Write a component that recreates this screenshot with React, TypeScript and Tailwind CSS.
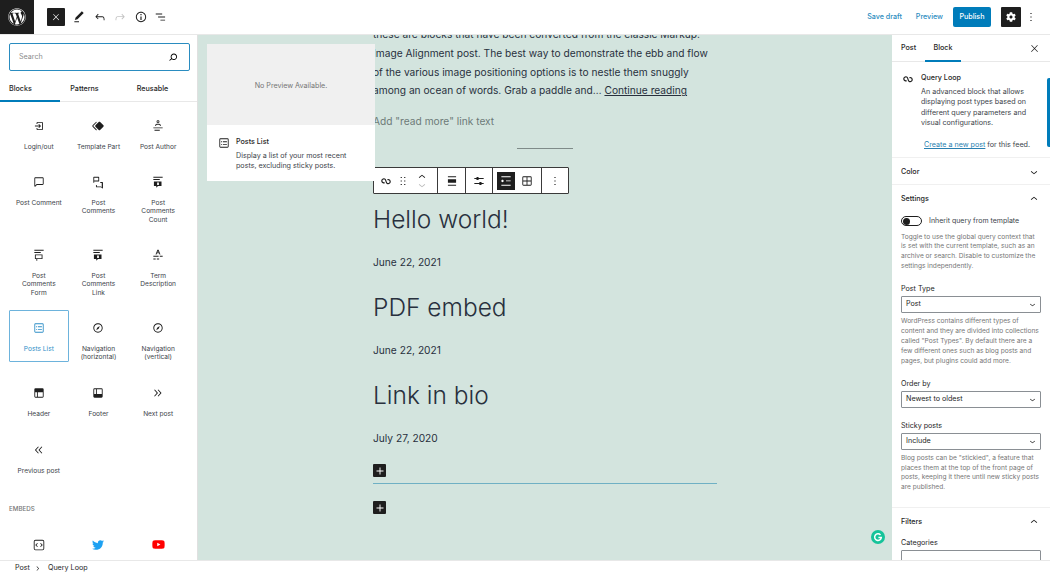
import React from "react";
import { FaWordpress, FaCog, FaTwitter, FaYoutube } from "react-icons/fa";

const FONT = "font-['Inter','Liberation_Sans',sans-serif]";

// WordPress icon paths
const P = {
  close: "M13 11.8l6.1-6.3-1-1-6.1 6.2-6.1-6.2-1 1 6.1 6.3-6.5 6.7 1 1 6.5-6.6 6.5 6.6 1-1z",
  pencil: "M20.1 5.1L16.9 2 6.2 12.7l-1.3 4.4 4.5-1.3L20.1 5.1zM4 20.8h8v-1.5H4v1.5z",
  undo: "M18.3 11.7c-.6-.6-1.4-.9-2.3-.9H6.7l2.9-3.3-1.1-1-4.5 5L8.5 16l1-1-2.7-2.7H16c.5 0 .9.2 1.3.5 1 1 1 3.4 1 4.5v.3h1.5v-.2c0-1.5 0-4.3-1.5-5.7z",
  redo: "M15.6 6.5l-1.1 1 2.9 3.3H8c-.9 0-1.7.3-2.3.9-1.4 1.5-1.4 4.2-1.4 5.6v.2h1.5v-.3c0-1.1 0-3.5 1-4.5.3-.3.7-.5 1.3-.5h9.2L14.5 15l1.1 1.1 4.6-4.6-4.6-5z",
  info: "M12 3.2c-4.8 0-8.8 3.9-8.8 8.8 0 4.8 3.9 8.8 8.8 8.8 4.8 0 8.8-3.9 8.8-8.8 0-4.8-4-8.8-8.8-8.8zm0 16c-4 0-7.2-3.3-7.2-7.2C4.8 8 8 4.8 12 4.8s7.2 3.3 7.2 7.2c0 4-3.2 7.2-7.2 7.2zM11 17h2v-6h-2v6zm0-8h2V7h-2v2z",
  outline: "M3 6h11v1.5H3zM7 11.2h12v1.5H7zM11 16.5h8V18h-8z",
  search: "M13.5 6C10.5 6 8 8.5 8 11.5c0 1.1.3 2.1.9 3l-3.4 3 1 1.1 3.4-2.9c1 .9 2.2 1.4 3.6 1.4 3 0 5.5-2.5 5.5-5.5C19 8.5 16.5 6 13.5 6zm0 9.5c-2.2 0-4-1.8-4-4s1.8-4 4-4 4 1.8 4 4-1.8 4-4 4z",
  login: "M11 14.5l1.1 1.1 3-3 .5-.5-.6-.6-3-3-1 1 1.7 1.7H5v1.5h7.7L11 14.5zM16.8 5h-7c-1.1 0-2 .9-2 2v1.5h1.5V7c0-.3.2-.5.5-.5h7c.3 0 .5.2.5.5v10c0 .3-.2.5-.5.5h-7c-.3 0-.5-.2-.5-.5v-1.5H7.8V17c0 1.1.9 2 2 2h7c1.1 0 2-.9 2-2V7c0-1.1-.9-2-2-2z",
  part: "M21.3 10.8l-5.6-5.6c-.7-.7-1.8-.7-2.5 0l-5.6 5.6c-.7.7-.7 1.8 0 2.5l5.6 5.6c.3.3.8.5 1.2.5s.9-.2 1.2-.5l5.6-5.6c.8-.7.8-1.9.1-2.5zm-17.6 1L10 5.5l-1-1-6.3 6.3c-.7.7-.7 1.8 0 2.5L9 19.5l1.1-1.1-6.3-6.3c-.2 0-.2-.2-.1-.3z",
  author: "M13 4.5a1 1 0 11-2 0 1 1 0 012 0zm1.5 0a2.5 2.5 0 11-5 0 2.5 2.5 0 015 0zm2.25 7.5v-1A2.75 2.75 0 0014 8.25h-4A2.75 2.75 0 007.25 11v1h1.5v-1c0-.69.56-1.25 1.25-1.25h4c.69 0 1.25.56 1.25 1.25v1h1.5zM6 20h9v-1.5H6V20zm14-4H4v-1.5h16V16z",
  comment: "M18 4H6c-1.1 0-2 .9-2 2v12.9c0 .6.5 1.1 1.1 1.1.3 0 .5-.1.8-.3L8.5 17H18c1.1 0 2-.9 2-2V6c0-1.1-.9-2-2-2zm.5 11c0 .3-.2.5-.5.5H7.9l-2.4 2.4V6c0-.3.2-.5.5-.5h12c.3 0 .5.2.5.5v9z",
  comments: "M14 10.1V4c0-.6-.4-1-1-1H5c-.6 0-1 .4-1 1v9.3h1.5V11.1h7.5c.6 0 1-.4 1-1zm-1.5-.5h-7V4.5h7v5.1zM19 12h-3.1v1.5h2.5v7.3l-1.2-1.2H10v-2.5H8.5v3c0 .6.4 1 1 1h7.7l1.8 1.8c.1.1.3.2.6.2.1 0 .2 0 .3-.1.4-.1.6-.5.6-.8V13c0-.6-.4-1-1-1z",
  count: "M4 3h16v1.5H4zM4 7h11v1.5H4zM5 11h13v8h-6l-3 3v-3H5zm5.5 2v4h3v-4z",
  form: "M4 3h16v1.5H4zM4 7h11v1.5H4zM5 11h13v8H9v3H7.5v-3H5zm1.5 1.5v5h10v-5z",
  term: "M11 3h2l3.2 8h-1.6l-.8-2H10.2l-.8 2H7.8zm1 2-1.2 2.6h2.4zM4 13.5h9V15H4zM15 13.5h5V15h-5zM4 18h4v1.5H4zM10 18h4v1.5h-4z",
  postsList: "M18 5.5H6a.5.5 0 00-.5.5v12a.5.5 0 00.5.5h12a.5.5 0 00.5-.5V6a.5.5 0 00-.5-.5zM6 4h12a2 2 0 012 2v12a2 2 0 01-2 2H6a2 2 0 01-2-2V6a2 2 0 012-2zm1 5h1.5v1.5H7V9zm1.5 4.5H7V15h1.5v-1.5zM10 9h7v1.5h-7V9zm7 4.5h-7V15h7v-1.5z",
  nav: "M12 4c-4.4 0-8 3.6-8 8s3.6 8 8 8 8-3.6 8-8-3.6-8-8-8zm0 14.5c-3.6 0-6.5-2.9-6.5-6.5S8.4 5.5 12 5.5s6.5 2.9 6.5 6.5-2.9 6.5-6.5 6.5zM9 16l4.5-3L15 8.4l-4.5 3L9 16z",
  header: "M18.5 10.5H10v8h8a.5.5 0 00.5-.5v-7.5zm-10 0h-3V18a.5.5 0 00.5.5h2.5v-8zM6 4h12a2 2 0 012 2v12a2 2 0 01-2 2H6a2 2 0 01-2-2V6a2 2 0 012-2z",
  footer: "M18 5.5h-8v8h8.5V6a.5.5 0 00-.5-.5zm-9.5 8h-3V6a.5.5 0 01.5-.5h2.5v8zM6 4h12a2 2 0 012 2v12a2 2 0 01-2 2H6a2 2 0 01-2-2V6a2 2 0 012-2z",
  next: "M6.6 6L5.4 7l4.5 5-4.5 5 1.1 1 5.5-6-5.4-6zm6 0l-1.1 1 4.5 5-4.5 5 1.1 1 5.5-6-5.5-6z",
  prev: "M11.6 7l-1.1-1L5 12l5.5 6 1.1-1L7 12l4.6-5zm6 0l-1.1-1-5.5 6 5.5 6 1.1-1-4.6-5 4.6-5z",
  embed: "M6 3h12a3 3 0 013 3v12a3 3 0 01-3 3H6a3 3 0 01-3-3V6a3 3 0 013-3zm0 1.5A1.5 1.5 0 004.5 6v12A1.5 1.5 0 006 19.5h12a1.5 1.5 0 001.5-1.5V6A1.5 1.5 0 0018 4.5zM10 9.5L7.5 12l2.5 2.5-1 1L5.5 12 9 8.5zM14 9.5l1-1 3.5 3.5-3.5 3.5-1-1 2.5-2.5z",
  chevronDown: "M17.5 11.6L12 16l-5.5-4.4.9-1.2L12 14l4.5-3.6 1 1.2z",
  chevronUp: "M6.5 12.4L12 8l5.5 4.4-.9 1.2L12 10l-4.5 3.6-1-1.2z",
  chevronRight: "M10.6 6L9.5 7l4.6 5-4.6 5 1.1 1 5.5-6-5.5-6z",
  drag: "M8 7h2V5H8v2zm0 6h2v-2H8v2zm0 6h2v-2H8v2zm6-14v2h2V5h-2zm0 8h2v-2h-2v2zm0 6h2v-2h-2v2z",
  more: "M13 19h-2v-2h2v2zm0-6h-2v-2h2v2zm0-6h-2V5h2v2z",
  list: "M4 4v1.5h16V4H4zm8 8.5h8V11h-8v1.5zM4 20h16v-1.5H4V20zm4-8c0-1.1-.9-2-2-2s-2 .9-2 2 .9 2 2 2 2-.9 2-2z",
  grid: "M6 4h12a2 2 0 012 2v12a2 2 0 01-2 2H6a2 2 0 01-2-2V6a2 2 0 012-2zm0 1.5a.5.5 0 00-.5.5v5.25h5.75V5.5zm6.75 0v5.75h5.75V6a.5.5 0 00-.5-.5zm5.75 7.25h-5.75v5.75H18a.5.5 0 00.5-.5zm-7.25 5.75v-5.75H5.5V18a.5.5 0 00.5.5z",
  align: "M5 5.5h14V4H5v1.5zm0 14.5h14v-1.5H5V20zM5 9h14v6H5V9z",
  sliders: "M14.5 13.8c-1.1 0-2.1.7-2.4 1.8H4V17h8.1c.3 1 1.3 1.8 2.4 1.8s2.1-.7 2.4-1.8H20v-1.5h-3.1c-.3-1-1.3-1.7-2.4-1.7zM11.9 7c-.3-1-1.3-1.8-2.4-1.8S7.4 6 7.1 7H4v1.5h3.1c.3 1 1.3 1.8 2.4 1.8s2.1-.7 2.4-1.8H20V7h-8.1z",
  plus: "M18 11.2h-5.2V6h-1.6v5.2H6v1.6h5.2V18h1.6v-5.2H18z",
};

function Icon({ d, size = 14, className = "" }: { d: string; size?: number; className?: string }) {
  return (
    <svg width={size} height={size} viewBox="0 0 24 24" fill="currentColor" fillRule="evenodd" className={`shrink-0 ${className}`}>
      <path d={d} />
    </svg>
  );
}

function LoopIcon({ size = 14 }: { size?: number }) {
  return (
    <svg width={size} height={size} viewBox="0 0 24 24" fill="none" stroke="currentColor" strokeWidth="2" className="shrink-0">
      <path d="M9.6 14.8a3.4 3.4 0 1 1 1.9-4l1 3.2a3.4 3.4 0 1 0 1.9-4" />
    </svg>
  );
}

const BLOCKS: { label: string; icon: string; active?: boolean; tall?: boolean }[] = [
  { label: "Login/out", icon: P.login },
  { label: "Template Part", icon: P.part },
  { label: "Post Author", icon: P.author },
  { label: "Post Comment", icon: P.comment },
  { label: "Post Comments", icon: P.comments },
  { label: "Post Comments Count", icon: P.count },
  { label: "Post Comments Form", icon: P.form },
  { label: "Post Comments Link", icon: P.count },
  { label: "Term Description", icon: P.term },
  { label: "Posts List", icon: P.postsList, active: true },
  { label: "Navigation (horizontal)", icon: P.nav, tall: true },
  { label: "Navigation (vertical)", icon: P.nav, tall: true },
  { label: "Header", icon: P.header, tall: true },
  { label: "Footer", icon: P.footer, tall: true },
  { label: "Next post", icon: P.next, tall: true },
  { label: "Previous post", icon: P.prev },
];

function BlockCell({ label, icon, active, tall }: { label: string; icon: string; active?: boolean; tall?: boolean }) {
  return (
    <div
      className={`flex flex-col items-center rounded-[1px] border px-[5px] pt-[10px] ${tall ? "pb-[8.7px]" : "pb-[7.7px]"} ${
        active ? "border-[#6db3dc] text-[#2f8fc7]" : "border-transparent text-[#1e1e1e]"
      }`}
    >
      <Icon d={icon} />
      <span className={`mt-[10px] text-center text-[6.6px] leading-[8.3px] ${active ? "" : "text-[#3c434a]"}`}>{label}</span>
    </div>
  );
}

function LeftPanel() {
  return (
    <aside className="flex h-full w-[198px] shrink-0 flex-col overflow-hidden border-r border-[#e0e0e0] bg-white">
      <div className="mx-[9px] mt-[8px] flex h-[28px] w-[181px] shrink-0 items-center justify-between rounded-[2px] border border-[#2a8cc0] px-[9px]">
        <span className="pt-[1px] text-[7.15px] text-[#8a8a8a]">Search</span>
        <Icon d={P.search} />
      </div>
      <div className="mt-[10px] flex h-[21px] shrink-0 items-center border-b border-[#e8e8e8] pb-[3px] text-[7.15px] font-medium text-[#1e1e1e]">
        <div className="relative flex h-full w-[60px] items-center pl-[9px]">
          Blocks
          <div className="absolute right-0 bottom-[-4px] left-0 h-[2px] bg-[#007cba]" />
        </div>
        <div className="flex h-full w-[49px] items-center justify-center">Patterns</div>
        <div className="flex h-full w-[87px] items-center justify-center">Reusable</div>
      </div>
      <div className="mx-[9px] mt-[6px] grid shrink-0 grid-cols-3 items-start gap-y-[4.2px]">
        {BLOCKS.map(b => (
          <BlockCell key={b.label} {...b} />
        ))}
      </div>
      <div className="mx-[9px] mt-[20px] shrink-0 text-[6.2px] font-medium text-[#757575]">EMBEDS</div>
      <div className="mx-[9px] mt-[24px] grid shrink-0 grid-cols-3 justify-items-center">
        <div className="flex h-[14px] items-center text-[#1e1e1e]">
          <Icon d={P.embed} size={14} />
        </div>
        <div className="flex h-[14px] items-center text-[#1da1f2]">
          <FaTwitter size={12} />
        </div>
        <div className="flex h-[14px] items-center text-[#ff0000]">
          <FaYoutube size={13} />
        </div>
      </div>
    </aside>
  );
}

function TopBar() {
  return (
    <header className="flex h-[35px] shrink-0 items-center border-b border-[#e8e8e8] bg-white">
      <div className="flex h-[34px] w-[34px] shrink-0 items-center justify-center bg-[#1e1e1e] text-white">
        <FaWordpress size={18} />
      </div>
      <div className="ml-[13px] flex h-[18px] w-[18px] items-center justify-center rounded-[1px] bg-[#1e1e1e] text-white">
        <Icon d={P.close} size={10} />
      </div>
      <div className="ml-[7px] flex items-center gap-[6.5px] text-[#1e1e1e]">
        <Icon d={P.pencil} />
        <Icon d={P.undo} />
        <Icon d={P.redo} className="text-[#c4c4c4]" />
        <Icon d={P.info} />
        <Icon d={P.outline} />
      </div>
      <div className="ml-auto flex items-center text-[7.15px] font-medium">
        <span className="pt-[1px] text-[#2a8cc0]">Save draft</span>
        <span className="ml-[14px] pt-[1px] text-[#2a8cc0]">Preview</span>
        <span className="ml-[10px] flex h-[20px] w-[38px] items-center justify-center rounded-[2px] bg-[#007cba] pt-[1px] text-white">Publish</span>
        <span className="ml-[10px] flex h-[20px] w-[20px] items-center justify-center rounded-[1px] bg-[#1e1e1e] text-white">
          <FaCog size={10} />
        </span>
        <Icon d={P.more} className="mr-[12px] ml-[3px] text-[#1e1e1e]" />
      </div>
    </header>
  );
}

function BlockToolbar() {
  return (
    <div className="flex h-[27px] w-[196px] items-center rounded-[1px] border border-[#3a3a3a] bg-white text-[#1e1e1e]">
      <div className="flex h-full w-[64px] items-center border-r border-[#3a3a3a] pl-[5px]">
        <LoopIcon />
        <Icon d={P.drag} className="ml-[3px]" />
        <div className="ml-[5px] flex flex-col items-center">
          <Icon d={P.chevronUp} className="-mb-[6px]" />
          <Icon d={P.chevronDown} className="text-[#bbbbbb]" />
        </div>
      </div>
      <div className="flex h-full w-[28px] items-center justify-center border-r border-[#3a3a3a]">
        <Icon d={P.align} />
      </div>
      <div className="flex h-full w-[27px] items-center justify-center border-r border-[#3a3a3a]">
        <Icon d={P.sliders} />
      </div>
      <div className="flex h-full w-[49px] items-center border-r border-[#3a3a3a] pl-[4px]">
        <span className="flex h-[18px] w-[18px] items-center justify-center bg-[#1e1e1e] text-white">
          <Icon d={P.list} />
        </span>
        <Icon d={P.grid} className="ml-[5px]" />
      </div>
      <div className="flex flex-1 items-center justify-center">
        <Icon d={P.more} />
      </div>
    </div>
  );
}

function AddButton() {
  return (
    <div className="flex h-[13px] w-[13px] items-center justify-center rounded-[1px] bg-[#1e1e1e] text-white">
      <Icon d={P.plus} />
    </div>
  );
}

const POSTS = [
  { title: "Hello world!", date: "June 22, 2021" },
  { title: "PDF embed", date: "June 22, 2021" },
  { title: "Link in bio", date: "July 27, 2020" },
];

function Canvas() {
  return (
    <main className="relative min-w-0 flex-1 overflow-hidden bg-[#d3e4de] text-[#28303d]">
      <div className="ml-[175px] -mt-[10px] w-[344px]">
        <p className="text-[10.2px] leading-[18.8px] whitespace-nowrap">
          these are blocks that have been converted from the classic Markup:
          <br />
          Image Alignment post. The best way to demonstrate the ebb and flow
          <br />
          of the various image positioning options is to nestle them snuggly
          <br />
          among an ocean of words. Grab a paddle and… <span className="underline">Continue reading</span>
        </p>
        <p className="mt-[12px] text-[10.2px] leading-[18px] text-[#6d7a78]">Add "read more" link text</p>
        <div className="mt-[18px] ml-[144px] h-[1px] w-[56px] bg-[#7f8b89]" />
        <div className="mt-[18px]">
          <BlockToolbar />
        </div>
        <div className="mt-[8px]">
          {POSTS.map(p => (
            <div key={p.title} className="mb-[19px]">
              <h2 className="text-[24.5px] leading-[34px] font-light">{p.title}</h2>
              <p className="mt-[17px] text-[10.2px] leading-[18px]">{p.date}</p>
            </div>
          ))}
        </div>
        <div className="-mt-[2px]">
          <AddButton />
        </div>
        <div className="mt-[6px] h-[1px] w-full bg-[#6fb0c4]" />
        <div className="mt-[17px]">
          <AddButton />
        </div>
      </div>

      {/* inserter preview */}
      <div className="absolute top-[9px] left-[9px] z-10 w-[168px] bg-white">
        <div className="flex h-[81px] items-center justify-center bg-[#f0f0f0] pt-[3px] text-[7.15px] text-[#757575]">No Preview Available.</div>
        <div className="flex h-[56px] pt-[11px] pl-[10px] text-[#1e1e1e]">
          <Icon d={P.postsList} />
          <div className="ml-[5px] w-[128px]">
            <div className="text-[7.15px] leading-[12px] font-medium">Posts List</div>
            <div className="mt-[3px] text-[7.15px] leading-[10.3px] text-[#3c434a]">
              Display a list of your most recent posts, excluding sticky posts.
            </div>
          </div>
        </div>
      </div>

      {/* grammarly badge */}
      <div className="absolute right-[7px] bottom-[16px] flex h-[14px] w-[14px] items-center justify-center rounded-full bg-[#15c39a]">
        <svg width="10" height="10" viewBox="0 0 24 24" fill="none" stroke="white" strokeWidth="3.5">
          <path d="M18 7a8 8 0 1 0 2 6h-7" />
        </svg>
      </div>
    </main>
  );
}

function SelectBox({ value }: { value: string }) {
  return (
    <div className="mt-[2px] flex h-[17px] w-[140px] items-center justify-between rounded-[1px] border border-[#8a8f94] pr-[2px] pl-[4px] text-[7.15px] text-[#1e1e1e]">
      {value}
      <Icon d={P.chevronDown} size={11} />
    </div>
  );
}

function SectionHead({ title, open }: { title: string; open?: boolean }) {
  return (
    <div className="flex h-[14px] items-center justify-between text-[7.15px] font-medium text-[#1e1e1e]">
      {title}
      <Icon d={open ? P.chevronUp : P.chevronDown} />
    </div>
  );
}

function Help({ children }: { children: React.ReactNode }) {
  return <p className="text-[6.6px] leading-[9.9px] text-[#757575]">{children}</p>;
}

function Label({ children }: { children: React.ReactNode }) {
  return <div className="text-[7.15px] leading-[10px] text-[#1e1e1e]">{children}</div>;
}

function RightPanel() {
  return (
    <aside className="flex h-full w-[158px] shrink-0 flex-col overflow-hidden bg-white text-[#1e1e1e]">
      <div className="flex h-[27px] shrink-0 items-center border-b border-[#e8e8e8] pr-[10px] text-[7.15px] font-medium">
        <div className="flex h-full w-[33px] items-center justify-center">Post</div>
        <div className="relative flex h-full w-[36px] items-center justify-center">
          Block
          <div className="absolute right-0 bottom-[-1px] left-0 h-[2px] bg-[#007cba]" />
        </div>
        <Icon d={P.close} size={11} className="ml-auto" />
      </div>
      <div className="flex h-[96px] shrink-0 border-b border-[#f0f0f0] pt-[10px] pl-[9px]">
        <LoopIcon />
        <div className="ml-[6px] w-[112px]">
          <div className="text-[7.15px] leading-[11px] font-medium">Query Loop</div>
          <p className="mt-[4px] text-[7.15px] leading-[10.3px] text-[#3c434a]">
            An advanced block that allows displaying post types based on different query parameters and visual configurations.
          </p>
          <p className="mt-[12px] ml-[3px] whitespace-nowrap text-[7.15px] leading-[10px] text-[#3c434a]">
            <span className="text-[#2a7fb0] underline">Create a new post</span> for this feed.
          </p>
        </div>
      </div>
      <div className="flex h-[27px] shrink-0 flex-col justify-center border-b border-[#f0f0f0] px-[9px] pt-[2px]">
        <SectionHead title="Color" />
      </div>
      <div className="shrink-0 border-b border-[#f0f0f0] pt-[7px] pr-[9px] pb-[14px] pl-[9px]">
        <SectionHead title="Settings" open />
        <div className="mt-[10px] flex items-center">
          <div className="flex h-[10px] w-[21px] items-center rounded-full border border-[#1e1e1e] pl-[1px]">
            <div className="h-[7px] w-[7px] rounded-full bg-[#1e1e1e]" />
          </div>
          <span className="ml-[7px] text-[7px] text-[#3c434a]">Inherit query from template</span>
        </div>
        <div className="mt-[6px]">
          <Help>
            Toggle to use the global query context that is set with the current template, such as an archive or search. Disable to customize the settings independently.
          </Help>
        </div>
        <div className="mt-[12px]">
          <Label>Post Type</Label>
        </div>
        <SelectBox value="Post" />
        <div className="mt-[4px]">
          <Help>
            WordPress contains different types of content and they are divided into collections called "Post Types". By default there are a few different ones such as blog posts and pages, but plugins could add more.
          </Help>
        </div>
        <div className="mt-[12px]">
          <Label>Order by</Label>
        </div>
        <SelectBox value="Newest to oldest" />
        <div className="mt-[13px]">
          <Label>Sticky posts</Label>
        </div>
        <SelectBox value="Include" />
        <div className="mt-[4px]">
          <Help>
            Blog posts can be "stickied", a feature that places them at the top of the front page of posts, keeping it there until new sticky posts are published.
          </Help>
        </div>
      </div>
      <div className="shrink-0 pt-[7px] pr-[9px] pl-[9px]">
        <SectionHead title="Filters" open />
        <div className="mt-[9px]">
          <Label>Categories</Label>
        </div>
        <div className="mt-[2px] h-[17px] w-[140px] rounded-[1px] border border-[#8a8f94]" />
      </div>
    </aside>
  );
}

export default function App() {
  return (
    <div className={`relative flex h-[574px] w-[1050px] flex-col overflow-hidden bg-white ${FONT}`}>
      <TopBar />
      <div className="flex min-h-0 flex-1">
        <LeftPanel />
        <Canvas />
        <RightPanel />
      </div>
      <footer className="flex h-[14px] shrink-0 items-center border-t border-[#e8e8e8] bg-white pt-[1px] pl-[15px] text-[7.15px] text-[#1e1e1e]">
        Post
        <Icon d={P.chevronRight} size={9} className="mr-[5.5px] ml-[3.5px]" />
        Query Loop
      </footer>
      {/* edge tab, right side of the window */}
      <div className="absolute top-[78px] right-0 h-[69px] w-[3px] rounded-l-[2px] bg-[#007cba]" />
    </div>
  );
}
